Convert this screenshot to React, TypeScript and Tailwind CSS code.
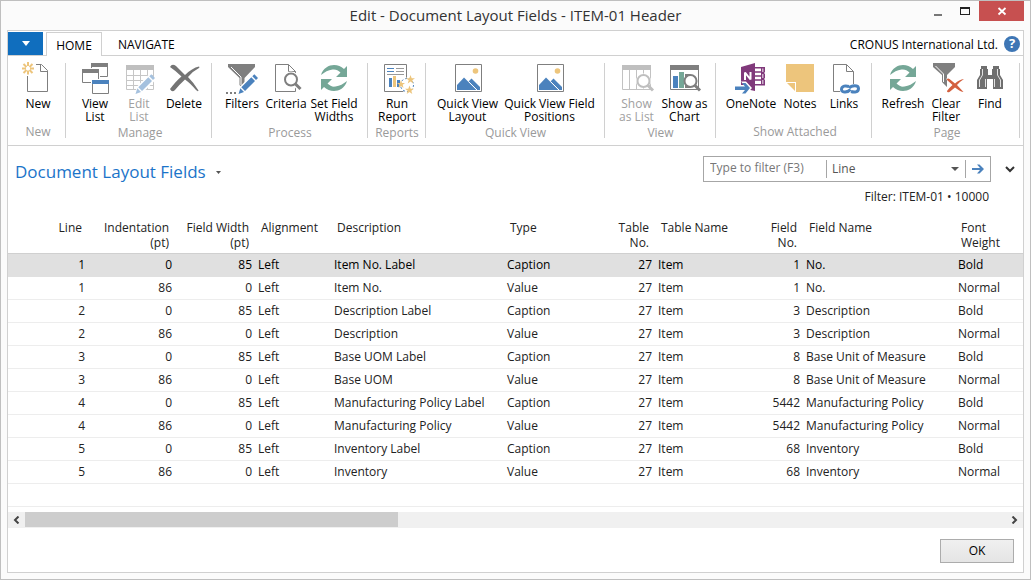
import React from 'react';

type IconName =
  | 'new' | 'viewList' | 'editList' | 'delete' | 'filters' | 'criteria' | 'refresh' | 'report'
  | 'picture' | 'showList' | 'showChart' | 'oneNote' | 'notes' | 'links' | 'clearFilter' | 'find';

const GRAY = '#7f7f7f';
const BLUE = '#4b82bd';
const GOLD = '#edc57c';
const GREEN = '#75a797';

function Magnifier({ cx, cy, color, bg = '#fff' }: { cx: number; cy: number; color: string; bg?: string }) {
  return (
    <>
      <path d={`M${cx + 4} ${cy + 4}L${cx + 9.5} ${cy + 9.5}`} stroke={color} strokeWidth="3" />
      <circle cx={cx} cy={cy} r="6" fill={bg} stroke={color} strokeWidth="2" />
    </>
  );
}

function Pencil({ color }: { color: string }) {
  return (
    <>
      <path d="M11.5 31.5L14 23.5L27 10.5L33 16.5L20 29.5Z" fill="#fff" />
      <path d="M12.5 31L14.3 25.3L18 29Z M15.3 24.3L25.3 14.3L29 18L19 28Z M26.3 13.3L28.3 11.3L32 15L30 17Z" fill={color} />
    </>
  );
}

const drawings: Record<IconName, React.ReactNode> = {
  new: (
    <>
      <path d="M14 1.5H19.5L25.5 7.5V28.5H5.5V13M18.5 1.5V8.5H25.5" fill="none" stroke={GRAY} />
      <path d="M6 -1V3M6 7.500V11.500M0 5.500H4M8 5.500H12M1.500 1L4.500 4M7.500 7L10.500 10M10.500 1L7.500 4M4.500 7L1.500 10" stroke={GOLD} strokeWidth="2" />
    </>
  ),
  viewList: (
    <>
      <path d="M12.500 .5H28.500V13.500H12.500Z" fill="#fff" stroke={GRAY} />
      <path d="M12 0H29V4H12Z" fill={GRAY} />
      <path d="M2 5H21V20H2Z" fill="#fff" />
      <path d="M3.500 6.500H19.500V19.500H3.500Z" fill="#fff" stroke={GRAY} />
      <path d="M3 6H20V10H3Z" fill={GRAY} />
      <path d="M12 16H31V31H12Z" fill="#fff" />
      <path d="M13.500 17.500H29.500V30.500H13.500Z" fill="#fff" stroke={GRAY} />
      <path d="M13 17H30V21H13Z" fill={BLUE} />
    </>
  ),
  editList: (
    <>
      <path d="M3.500 2.500H30.500V26.500H3.500ZM3 12.500H31M3 17.500H31M3 22.500H31M10.500 6V27M17.500 6V27M24.500 6V27" fill="none" stroke="#c6c6c6" />
      <path d="M3 2H31V7H3Z" fill="#bfbfbf" />
      <Pencil color="#a5c1de" />
    </>
  ),
  delete: (
    <path d="M2 4Q4 0 8 3Q12 7 17 12Q24 5 31 3.500Q32 4 31 5Q25 8 20 14Q26 20 30.500 27.500Q30 29 28 27Q22 20 17 16.500Q11 22 7 27Q4 30 2 26Q8 18 13.500 13.500Q8 8 2 4Z" fill="#747474" />
  ),
  filters: (
    <>
      <path d="M2 1H29V4L18.500 15V27L13.500 22V15L2 4Z" fill={GRAY} />
      <path d="M5 4L15 14V22" fill="none" stroke="#fff" />
      <path d="M0 29H2V31H0ZM4 29H6V31H4ZM8 29H10V31H8Z" fill={GRAY} />
      <Pencil color={BLUE} />
    </>
  ),
  criteria: (
    <>
      <path d="M5.500 1.500H18.500L25.500 8.500V28.500H5.500ZM18.500 1.500V8.500H25.500" fill="none" stroke={GRAY} />
      <circle cx="21" cy="16.500" r="8" fill="#fff" />
      <path d="M24 19.500L31 26.500" stroke="#fff" strokeWidth="6" />
      <Magnifier cx={21} cy={16.5} color={GRAY} />
    </>
  ),
  refresh: (
    <>
      <path d="M3 12C5 5 11 2 16 2C20 2 23 3.500 26 6L29 3V14H18L22.500 9.500C20 7 17.500 6 14.500 6.500C10 7 7 9 3 12Z" fill={GREEN} />
      <path d="M29 18C27 25 21 28 16 28C12 28 9 26.500 6 24L3 27V16H14L9.500 20.500C12 23 14.500 24 17.500 23.500C22 23 25 21 29 18Z" fill={GREEN} />
    </>
  ),
  report: (
    <>
      <path d="M3.500 1.500H25.500V28.500H3.500Z" fill="#fff" stroke={GRAY} />
      <path d="M6 5.500H13M6 8.500H13" stroke={BLUE} />
      <path d="M15 5.500H23M15 8.500H23M6 11.500H23" stroke="#999" />
      <path d="M8 15H11V24H8Z" fill={BLUE} />
      <path d="M12 13H15V24H12Z" fill={GOLD} />
      <path d="M16 17H19V24H16Z" fill={BLUE} />
      <circle cx="26" cy="22" r="7.500" fill="#fff" />
      <circle cx="26" cy="22" r="6.500" fill="none" stroke={BLUE} strokeDasharray="2 2" />
      <path d="M20 17L21 20H24L21.700 21.700L22.500 25L20 23L17.500 25L18.300 21.700L16 20H19Z" fill={GOLD} />
      <path d="M29.500 12L30.700 15.300H34L31.300 17.300L32.300 20.500L29.500 18.500L26.700 20.500L27.700 17.300L25 15.300H28.300Z" fill={GOLD} />
      <path d="M28.500 22.500L29.700 25.800H33L30.300 27.800L31.300 31L28.500 29L25.700 31L26.700 27.800L24 25.800H27.300Z" fill={GOLD} />
    </>
  ),
  picture: (
    <>
      <path d="M3.500 1.500H29.500V28.500H3.500Z" fill="#fff" stroke={GRAY} />
      <circle cx="23.500" cy="8" r="2.800" fill={GOLD} />
      <path d="M5 27V22L12 14.500L24.500 27Z" fill={BLUE} />
      <path d="M16.500 18.500L19.500 15.500L28 24V27H25Z" fill={BLUE} />
      <path d="M16.500 18.500L25 27" stroke="#fff" />
    </>
  ),
  showList: (
    <>
      <path d="M1.500 2.500H29.500V26.500H1.500ZM8.500 6V27M15.500 6V27M22.500 6V27" fill="none" stroke="#c2c2c2" />
      <path d="M1 2H30V7H1Z" fill="#bfbfbf" />
      <circle cx="22.500" cy="18" r="7.500" fill="#fff" />
      <Magnifier cx={22.5} cy={18} color="#bfbfbf" />
    </>
  ),
  showChart: (
    <>
      <path d="M1.500 2.500H29.500V26.500H1.500Z" fill="#fff" stroke={GRAY} />
      <path d="M1 2H30V7H1Z" fill={GRAY} />
      <path d="M4 13H9V25H4Z" fill={BLUE} />
      <path d="M10 9H15V25H10Z" fill={GREEN} />
      <path d="M16 11H21V25H16Z" fill={GRAY} />
      <Magnifier cx={21.5} cy={18} color={GRAY} />
    </>
  ),
  oneNote: (
    <>
      <path d="M20 4H30V9.500H29V10.500H30V15.500H29V16.500H30V22.500H20Z" fill="#80397b" />
      <path d="M20 5.500H26V21H20Z" fill="#fff" />
      <path d="M20 9H26M20 13H26M20 17H26" stroke="#80397b" strokeWidth="1.500" />
      <path d="M27 5.500H28.500V9H27ZM27 11H28.500V15H27ZM27 17H28.500V21H27Z" fill="#fff" opacity=".6" />
      <path d="M6 4L20 0V28L6 25Z" fill="#80397b" />
      <path d="M10 17V9.500L15.500 16.500V9" fill="none" stroke="#fff" strokeWidth="2" strokeLinejoin="bevel" />
      <path d="M-1 22H9L6 18.500H11L17 25L11 31.500H6L9 28H-1Z" fill="#fff" />
      <path d="M0 23.500H10L7 20H10.500L15 25L10.500 30.500H7L10 27H0Z" fill={BLUE} />
    </>
  ),
  notes: (
    <>
      <path d="M2 1H30V29H12V19H2Z" fill={GOLD} />
      <path d="M3 20H11V28Z" fill={GOLD} />
    </>
  ),
  links: (
    <>
      <path d="M12 28.500H5.500V1.500H18.500L25.500 8.500V21M18.500 1.500V8.500H25.500" fill="none" stroke={GRAY} />
      <path d="M22.500 26.500C20.500 29 13.500 30.500 13.500 26.500S18 22.500 21 23.500" fill="none" stroke={BLUE} strokeWidth="3" />
      <path d="M21 25C23.500 22 30.500 21.500 30.500 25.500S26 29.500 23 28.500" fill="none" stroke={BLUE} strokeWidth="3" />
    </>
  ),
  clearFilter: (
    <>
      <path d="M3 0H25V4L17 12V24L12 19V12L3 4Z" fill={GRAY} />
      <path d="M5.500 3L13.500 11V19" fill="none" stroke="#fff" />
      <path d="M16 16L19 14L25 19Q29 15 34 15Q30 18 27.500 21.500L34 29L31 30L25 24.500L19 30L16 28L22 22Z" fill="#fff" />
      <path d="M16.500 16.500Q18 15 19.500 16L25 20.500Q29 16.500 34 16Q30 18.500 27 22L33.500 29Q31 29 25 24.500L19.500 29Q17 30 17 28Q19 25 22.500 22Z" fill="#d3603f" />
    </>
  ),
  find: (
    <>
      <path d="M7 3H13V6H14V12H18V6H19V3H25V6H26V12L29 17V26H19V16H13V26H3V17L6 12V6H7Z" fill="#6f6f6f" />
      <path d="M8.500 6V12L5.500 17V24M23.500 6V12L26.500 17V24M11.500 16V24M20.500 16V24" fill="none" stroke="#fff" strokeWidth=".8" />
      <path d="M3 24.500H13M19 24.500H29" stroke="#6f6f6f" />
    </>
  ),
};

function Icon({ name }: { name: IconName }) {
  return (
    <svg className="size-8 shrink-0 overflow-visible" viewBox="0 0 32 32" aria-hidden="true">
      {drawings[name]}
    </svg>
  );
}

type Action = { icon: IconName; lines: string[]; width: string; disabled?: boolean };
type Group = { label: string; box: string; actions: Action[] };

const groups: Group[] = [
  { label: 'New', box: 'w-[58px] pl-[3px]', actions: [{ icon: 'new', lines: ['New'], width: 'w-11' }] },
  {
    label: 'Manage', box: 'w-[146px] pl-[3px]', actions: [
      { icon: 'viewList', lines: ['View', 'List'], width: 'w-11' },
      { icon: 'editList', lines: ['Edit', 'List'], width: 'w-11', disabled: true },
      { icon: 'delete', lines: ['Delete'], width: 'w-[46px]' },
    ],
  },
  {
    label: 'Process', box: 'w-[156px] pl-px', actions: [
      { icon: 'filters', lines: ['Filters'], width: 'w-11' },
      { icon: 'criteria', lines: ['Criteria'], width: 'w-11' },
      { icon: 'refresh', lines: ['Set Field', 'Widths'], width: 'w-[52px]' },
    ],
  },
  { label: 'Reports', box: 'w-[58px] pl-px', actions: [{ icon: 'report', lines: ['Run', 'Report'], width: 'w-11' }] },
  {
    label: 'Quick View', box: 'w-[179px] pl-px', actions: [
      { icon: 'picture', lines: ['Quick View', 'Layout'], width: 'w-[68px]' },
      { icon: 'picture', lines: ['Quick View Field', 'Positions'], width: 'w-24' },
    ],
  },
  {
    label: 'View', box: 'w-[111px] pl-px', actions: [
      { icon: 'showList', lines: ['Show', 'as List'], width: 'w-12', disabled: true },
      { icon: 'showChart', lines: ['Show as', 'Chart'], width: 'w-12' },
    ],
  },
  {
    label: 'Show Attached', box: 'w-[156px] pl-[3px]', actions: [
      { icon: 'oneNote', lines: ['OneNote'], width: 'w-[54px]' },
      { icon: 'notes', lines: ['Notes'], width: 'w-11' },
      { icon: 'links', lines: ['Links'], width: 'w-11' },
    ],
  },
  {
    label: 'Page', box: 'w-[148px] pl-[3px]', actions: [
      { icon: 'refresh', lines: ['Refresh'], width: 'w-[46px]' },
      { icon: 'clearFilter', lines: ['Clear', 'Filter'], width: 'w-10' },
      { icon: 'find', lines: ['Find'], width: 'w-12' },
    ],
  },
];

type Column = { title: string[]; width: string; right?: boolean };

const columns: Column[] = [
  { title: ['Line'], width: 'w-20', right: true },
  { title: ['Indentation', '(pt)'], width: 'w-[87px]', right: true },
  { title: ['Field Width', '(pt)'], width: 'w-20', right: true },
  { title: ['Alignment'], width: 'w-[76px]' },
  { title: ['Description'], width: 'w-[173px]' },
  { title: ['Type'], width: 'w-24' },
  { title: ['Table', 'No.'], width: 'w-[55px]', right: true },
  { title: ['Table Name'], width: 'w-[101px]' },
  { title: ['Field', 'No.'], width: 'w-[47px]', right: true },
  { title: ['Field Name'], width: 'w-[152px]' },
  { title: ['Font', 'Weight'], width: 'w-auto' },
];

const fields: [string, string, string][] = [
  ['Item No.', '1', 'No.'],
  ['Description', '3', 'Description'],
  ['Base UOM', '8', 'Base Unit of Measure'],
  ['Manufacturing Policy', '5442', 'Manufacturing Policy'],
  ['Inventory', '68', 'Inventory'],
];

const rows = fields.flatMap(([name, no, fieldName], i) => [
  [`${i + 1}`, '0', '85', 'Left', `${name} Label`, 'Caption', '27', 'Item', no, fieldName, 'Bold'],
  [`${i + 1}`, '86', '0', 'Left', name, 'Value', '27', 'Item', no, fieldName, 'Normal'],
]);

function TitleBar() {
  return (
    <header className="flex h-[29px] items-start">
      <div className="w-[98px]" />
      <h1 className="flex-1 pt-[3px] text-center text-[15px] leading-[22px] text-[#333]">
        Edit - Document Layout Fields - ITEM-01 Header
      </h1>
      <div className="flex text-[#333]">
        <button aria-label="Minimize" className="flex h-[22px] w-6 items-center justify-center">
          <svg className="size-3" viewBox="0 0 12 12"><path d="M2 8H10V10H2Z" fill="#777" /></svg>
        </button>
        <button aria-label="Maximize" className="flex h-5 w-[29px] items-center justify-center">
          <svg className="size-3" viewBox="0 0 12 12"><path d="M1 2H11V10H1ZM2 4V9H10V4Z" fill="#222" fillRule="evenodd" /></svg>
        </button>
        <button aria-label="Close" className="flex h-5 w-[45px] items-center justify-center bg-[#c75050]">
          <svg className="size-3" viewBox="0 0 12 12"><path d="M2.500 3L9.500 9.500M9.500 3L2.500 9.500" stroke="#fff" strokeWidth="1.800" /></svg>
        </button>
      </div>
    </header>
  );
}

function Tabs() {
  return (
    <nav className="flex h-6 items-stretch pt-px">
      <button aria-label="Application menu" className="flex w-[35px] items-center justify-center bg-[#106ebe]">
        <svg className="h-[5px] w-2" viewBox="0 0 8 5"><path d="M0 0H8L4 5Z" fill="#fff" /></svg>
      </button>
      <a href="#home" className="z-10 -mb-px ml-[3px] flex w-14 items-center justify-center border border-b-0 border-[#d0d0d0] bg-white pt-[2px]">
        HOME
      </a>
      <a href="#navigate" className="ml-4 flex items-center pt-[3px]">NAVIGATE</a>
      <div className="ml-auto flex items-center gap-[6px] pr-[3px]">
        <span className="pt-[3px]">CRONUS International Ltd.</span>
        <button aria-label="Help" className="flex size-4 items-center justify-center rounded-full bg-[#3e76b5] text-[13px] font-bold leading-none text-white">
          ?
        </button>
      </div>
    </nav>
  );
}

function Ribbon() {
  return (
    <div className="flex h-[91px] border-y border-[#d0d0d0] py-[7px]">
      {groups.map((g) => (
        <section key={g.label} className={`flex shrink-0 flex-col items-center border-r border-[#d0d0d0] ${g.box}`}>
          <div className="mb-[3px] flex h-[65px] justify-center">
            {g.actions.map((a) => (
              <button
                key={a.lines.join(' ')}
                disabled={a.disabled}
                className={`flex flex-col items-center whitespace-nowrap leading-[13px] disabled:text-[#a0a0a0] ${a.width}`}
              >
                <Icon name={a.icon} />
                <span className="mt-[2px]">
                  {a.lines[0]}
                  {a.lines[1] && <><br />{a.lines[1]}</>}
                </span>
              </button>
            ))}
          </div>
          <h2 className="leading-[13px] text-[#9a9a9a]">{g.label}</h2>
        </section>
      ))}
    </div>
  );
}

function PageHeader() {
  return (
    <div className="flex justify-between pl-[7px] pt-[10px]">
      <button className="flex h-8 items-center gap-[10px] text-[17px] text-[#1b74c9]">
        Document Layout Fields
        <svg className="h-[3px] w-[5px]" viewBox="0 0 5 3"><path d="M0 0H5L2.500 3Z" fill="#555" /></svg>
      </button>
      <div className="flex flex-col text-[#555]">
        <div className="flex items-center">
          <div className="flex h-[26px] w-72 items-center border border-[#a6a6a6]">
            <input aria-label="Filter text" placeholder="Type to filter (F3)" className="w-[122px] pb-[2px] pl-[6px] outline-none placeholder:text-[#777]" />
            <div className="relative flex h-[18px] flex-1 items-center border-x border-[#a6a6a6]">
              <select aria-label="Filter field" className="w-full appearance-none bg-transparent pl-[5px] outline-none">
                <option>Line</option>
              </select>
              <svg className="pointer-events-none absolute right-[6px] h-1 w-2" viewBox="0 0 8 4"><path d="M0 0H8L4 4Z" fill="#555" /></svg>
            </div>
            <button aria-label="Apply filter" className="flex w-6 justify-center">
              <svg className="h-[10px] w-3" viewBox="0 0 12 10"><path d="M0 4H8L5 .5H7.500L12 5L7.500 9.500H5L8 6H0Z" fill={BLUE} /></svg>
            </button>
          </div>
          <button aria-label="Expand filters" className="flex w-8 justify-center pl-[6px]">
            <svg className="h-[7px] w-[10px]" viewBox="0 0 10 7"><path d="M1 1L5 5L9 1" fill="none" stroke="#333" strokeWidth="2" /></svg>
          </button>
        </div>
        <p className="mt-[7px] pr-[34px] text-right leading-4 text-[#222]">Filter: ITEM-01 • 10000</p>
      </div>
    </div>
  );
}

function FieldTable() {
  return (
    <table className="mt-[15px] w-full table-fixed border-collapse text-[#222]">
      <thead>
        <tr className="h-[33px] border-b border-[#d0d0d0] align-top">
          {columns.map((c) => (
            <th key={c.title.join(' ')} className={`px-[6px] font-normal leading-[15px] ${c.width} ${c.right ? 'text-right' : 'text-left'}`}>
              {c.title.map((t) => <span key={t} className="block whitespace-nowrap">{t}</span>)}
            </th>
          ))}
        </tr>
      </thead>
      <tbody>
        {rows.map((r, i) => (
          <tr key={i} className={`h-[23px] border-b ${i === 0 ? 'border-[#e0e0e0] bg-[#e0e0e0] text-black' : 'border-[#ededed]'}`}>
            {r.map((v, j) => (
              <td key={j} className={`whitespace-nowrap px-[3px] leading-4 ${columns[j].right ? 'text-right' : 'text-left'}`}>{v}</td>
            ))}
          </tr>
        ))}
        <tr className="h-[23px] border-b border-[#ededed]"><td colSpan={columns.length} /></tr>
      </tbody>
    </table>
  );
}

function ScrollBar() {
  return (
    <div className="mt-[5px] flex h-4 bg-[#f0f0f0]">
      <button aria-label="Scroll left" className="flex w-[17px] items-center justify-center">
        <svg className="h-2 w-[7px]" viewBox="0 0 7 8"><path d="M5.500 .5L2 4L5.500 7.500" fill="none" stroke="#444" strokeWidth="2" /></svg>
      </button>
      <div className="flex-1"><div className="h-[15px] w-[38%] bg-[#cdcdcd]" /></div>
      <button aria-label="Scroll right" className="flex w-[17px] items-center justify-center">
        <svg className="h-2 w-[7px]" viewBox="0 0 7 8"><path d="M1.500 .5L5 4L1.500 7.500" fill="none" stroke="#444" strokeWidth="2" /></svg>
      </button>
    </div>
  );
}

export default function App() {
  return (
    <div className="flex min-h-screen flex-col border border-[#bfbfbf] bg-[#fbfbfb] px-[6px] pb-[6px] font-['Open_Sans',sans-serif] text-[12px] text-black">
      <TitleBar />
      <main className="flex flex-1 flex-col border border-[#d0d0d0] bg-white">
        <Tabs />
        <Ribbon />
        <PageHeader />
        <FieldTable />
        <ScrollBar />
        <footer className="mt-auto flex justify-end pb-[9px] pr-[9px]">
          <button className="h-6 w-[74px] border border-[#acacac] bg-gradient-to-b from-[#f0f0f0] to-[#e5e5e5]">OK</button>
        </footer>
      </main>
    </div>
  );
}
